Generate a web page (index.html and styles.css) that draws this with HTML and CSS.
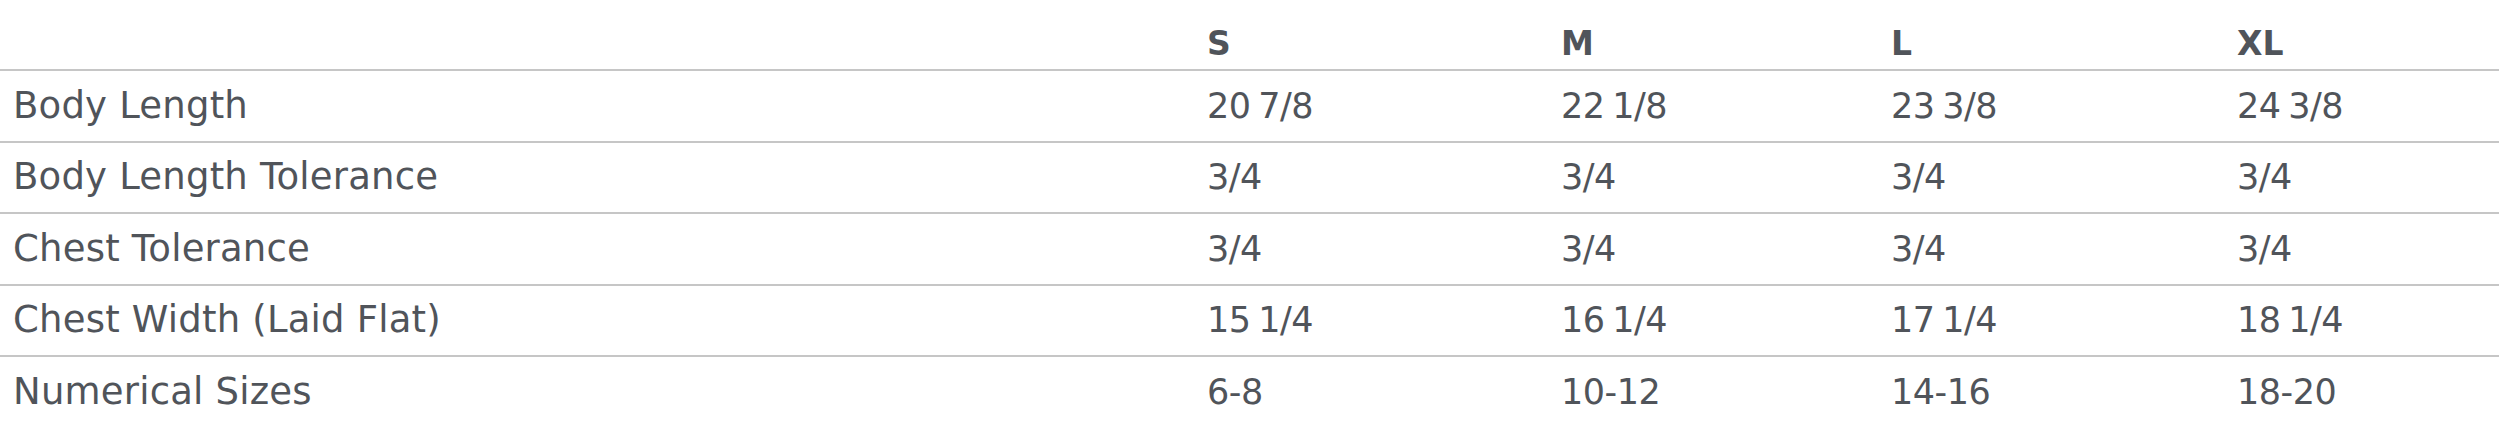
FILE: index.html
```html
<!DOCTYPE html>
<html lang="en">
<head>
<meta charset="utf-8">
<title>Size Chart</title>
<link rel="stylesheet" href="styles.css">
</head>
<body>
<table class="size-chart">
  <colgroup>
    <col class="col-label">
    <col class="col-s">
    <col class="col-m">
    <col class="col-l">
    <col class="col-xl">
  </colgroup>
  <thead>
    <tr>
      <th></th>
      <th>S</th>
      <th>M</th>
      <th>L</th>
      <th>XL</th>
    </tr>
  </thead>
  <tbody>
    <tr>
      <td class="label">Body Length</td>
      <td>20 7/8</td>
      <td>22 1/8</td>
      <td>23 3/8</td>
      <td>24 3/8</td>
    </tr>
    <tr>
      <td class="label">Body Length Tolerance</td>
      <td>3/4</td>
      <td>3/4</td>
      <td>3/4</td>
      <td>3/4</td>
    </tr>
    <tr>
      <td class="label">Chest Tolerance</td>
      <td>3/4</td>
      <td>3/4</td>
      <td>3/4</td>
      <td>3/4</td>
    </tr>
    <tr>
      <td class="label">Chest Width (Laid Flat)</td>
      <td>15 1/4</td>
      <td>16 1/4</td>
      <td>17 1/4</td>
      <td>18 1/4</td>
    </tr>
    <tr>
      <td class="label">Numerical Sizes</td>
      <td>6-8</td>
      <td>10-12</td>
      <td>14-16</td>
      <td>18-20</td>
    </tr>
  </tbody>
</table>
</body>
</html>
```

FILE: styles.css
```css
html, body {
  margin: 0;
  padding: 0;
  background: #ffffff;
}

body {
  font-family: "DejaVu Sans", "Liberation Sans", sans-serif;
  color: #50545a;
}

.size-chart {
  width: 2499px;
  table-layout: fixed;
  border-collapse: collapse;
  border-spacing: 0;
}

.col-label { width: 1194px; }
.col-s { width: 354px; }
.col-m { width: 330px; }
.col-l { width: 346px; }
.col-xl { width: 275px; }

.size-chart th,
.size-chart td {
  padding: 0 0 0 13px;
  text-align: left;
  white-space: nowrap;
}

.size-chart th {
  height: 64px;
  padding-bottom: 5px;
  vertical-align: bottom;
  font-size: 33px;
  font-weight: bold;
  line-height: 1.2;
  color: #50545a;
  border-bottom: 2px solid #c6c6c6;
}

.size-chart td {
  height: 69.5px;
  vertical-align: middle;
  font-size: 35px;
  line-height: 1.2;
  letter-spacing: -0.5px;
  word-spacing: -3px;
  border-bottom: 2px solid #c6c6c6;
}

.size-chart td.label {
  font-size: 37px;
  letter-spacing: 0.2px;
  word-spacing: 0;
}

.size-chart tbody tr:last-child td {
  border-bottom: none;
}
```
